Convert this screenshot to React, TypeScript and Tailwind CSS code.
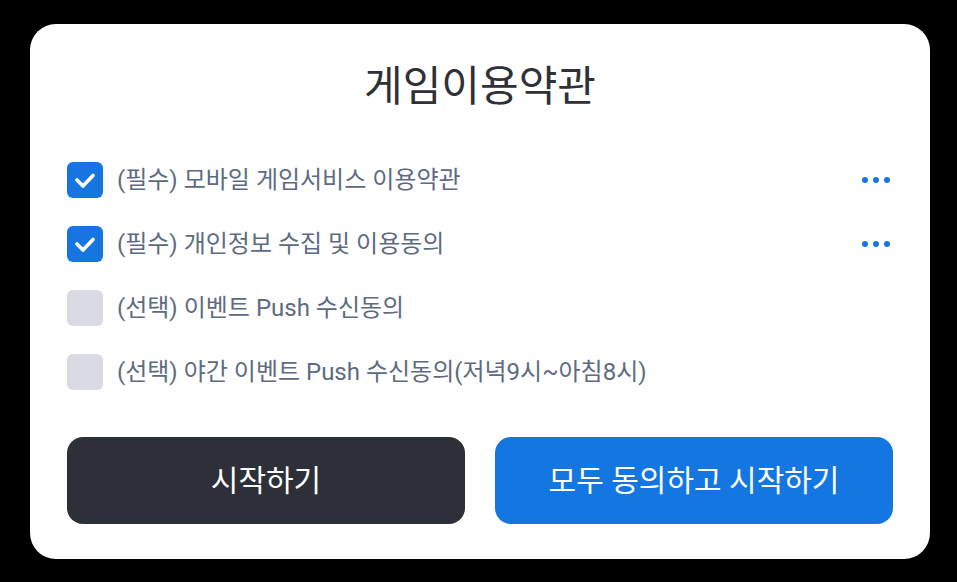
import { ReactNode } from 'react'

interface TermRowProps {
  checked: boolean
  label: string
  detail?: boolean
}

function CheckBox({ checked }: { checked: boolean }) {
  if (!checked) {
    return <div className="h-[36px] w-[36px] shrink-0 rounded-[6px] bg-[#d9dae4]" />
  }
  return (
    <div className="flex h-[36px] w-[36px] shrink-0 items-center justify-center rounded-[6px] bg-[#1675e0]">
      <svg width="36" height="36" viewBox="0 0 36 36" fill="none">
        <path d="M10 18l6 6 10-10.5" stroke="white" strokeWidth="3.6" strokeLinecap="round" strokeLinejoin="round" />
      </svg>
    </div>
  )
}

function TermRow({ checked, label, detail }: TermRowProps) {
  return (
    <div className="flex h-[36px] items-center">
      <CheckBox checked={checked} />
      <span className="ml-[14px] text-[24px] leading-none text-[#5d6b82]">{label}</span>
      {detail && (
        <div className="ml-auto mr-[3px] flex gap-[5px]">
          <span className="h-[6px] w-[6px] rounded-full bg-[#1675e0]" />
          <span className="h-[6px] w-[6px] rounded-full bg-[#1675e0]" />
          <span className="h-[6px] w-[6px] rounded-full bg-[#1675e0]" />
        </div>
      )}
    </div>
  )
}

function Button({ children, dark }: { children: ReactNode; dark?: boolean }) {
  return (
    <button
      className={
        dark
          ? 'flex h-[87px] flex-1 items-center justify-center rounded-[16px] bg-[#2d3038] text-[30px] text-white'
          : 'flex h-[87px] flex-1 items-center justify-center rounded-[16px] bg-[#1476e0] text-[30px] text-white'
      }
    >
      {children}
    </button>
  )
}

export default function App() {
  return (
    <div
      className="h-[582px] w-[957px] bg-black pl-[30px] pt-[24px]"
      style={{ fontFamily: 'Roboto, "Noto Sans CJK KR", sans-serif' }}
    >
      <div className="flex h-[535px] w-[900px] flex-col rounded-[26px] bg-white px-[37px] pb-[35px]">
        {/* Title */}
        <h1 className="mt-[38px] text-center text-[42px] leading-[50px] text-[#2f3136]">게임이용약관</h1>

        {/* Terms */}
        <div className="mt-[50px] flex flex-col gap-[28px]">
          <TermRow checked label="(필수) 모바일 게임서비스 이용약관" detail />
          <TermRow checked label="(필수) 개인정보 수집 및 이용동의" detail />
          <TermRow checked={false} label="(선택) 이벤트 Push 수신동의" />
          <TermRow checked={false} label="(선택) 야간 이벤트 Push 수신동의(저녁9시~아침8시)" />
        </div>

        {/* Actions */}
        <div className="mt-auto flex gap-[30px]">
          <Button dark>시작하기</Button>
          <Button>모두 동의하고 시작하기</Button>
        </div>
      </div>
    </div>
  )
}
